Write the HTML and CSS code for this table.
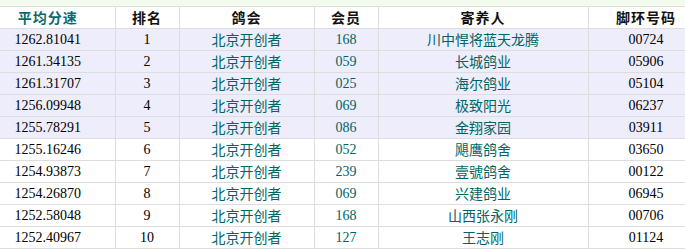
FILE: index.html
```html
<!DOCTYPE html>
<html lang="zh">
<head>
<meta charset="utf-8">
<link rel="stylesheet" href="styles.css">
</head>
<body>
<div class="topbar"></div>
<table class="rank">
  <colgroup>
    <col class="c-speed"><col class="c-rank"><col class="c-club"><col class="c-member"><col class="c-owner"><col class="c-ring">
  </colgroup>
  <thead>
    <tr>
      <th class="speed teal">平均分速</th>
      <th>排名</th>
      <th>鸽会</th>
      <th>会员</th>
      <th>寄养人</th>
      <th>脚环号码</th>
    </tr>
  </thead>
  <tbody>
    <tr class="hl"><td class="speed num">1262.81041</td><td class="num">1</td><td class="teal">北京开创者</td><td class="teal num">168</td><td class="teal">川中悍将蓝天龙腾</td><td class="num">00724</td></tr>
    <tr class="hl"><td class="speed num">1261.34135</td><td class="num">2</td><td class="teal">北京开创者</td><td class="teal num">059</td><td class="teal">长城鸽业</td><td class="num">05906</td></tr>
    <tr class="hl"><td class="speed num">1261.31707</td><td class="num">3</td><td class="teal">北京开创者</td><td class="teal num">025</td><td class="teal">海尔鸽业</td><td class="num">05104</td></tr>
    <tr class="hl"><td class="speed num">1256.09948</td><td class="num">4</td><td class="teal">北京开创者</td><td class="teal num">069</td><td class="teal">极致阳光</td><td class="num">06237</td></tr>
    <tr class="hl"><td class="speed num">1255.78291</td><td class="num">5</td><td class="teal">北京开创者</td><td class="teal num">086</td><td class="teal">金翔家园</td><td class="num">03911</td></tr>
    <tr><td class="speed num">1255.16246</td><td class="num">6</td><td class="teal">北京开创者</td><td class="teal num">052</td><td class="teal">飓鹰鸽舍</td><td class="num">03650</td></tr>
    <tr><td class="speed num">1254.93873</td><td class="num">7</td><td class="teal">北京开创者</td><td class="teal num">239</td><td class="teal">壹號鸽舍</td><td class="num">00122</td></tr>
    <tr><td class="speed num">1254.26870</td><td class="num">8</td><td class="teal">北京开创者</td><td class="teal num">069</td><td class="teal">兴建鸽业</td><td class="num">06945</td></tr>
    <tr><td class="speed num">1252.58048</td><td class="num">9</td><td class="teal">北京开创者</td><td class="teal num">168</td><td class="teal">山西张永刚</td><td class="num">00706</td></tr>
    <tr><td class="speed num">1252.40967</td><td class="num">10</td><td class="teal">北京开创者</td><td class="teal num">127</td><td class="teal">王志刚</td><td class="num">01124</td></tr>
  </tbody>
</table>
</body>
</html>
```
FILE: styles.css
```css
html, body {
  margin: 0;
  padding: 0;
  background: #ffffff;
  overflow: hidden;
}
body {
  width: 685px;
  height: 250px;
  font-family: "Noto Sans CJK SC", sans-serif;
  font-size: 14px;
  color: #000;
}
.topbar {
  height: 6px;
  background: #f4faee;
}
.rank {
  border-collapse: collapse;
  table-layout: fixed;
  width: 704px;
}
.c-speed { width: 115px; }
.c-rank { width: 64px; }
.c-club { width: 135px; }
.c-member { width: 64px; }
.c-owner { width: 210px; }
.c-ring { width: 116px; }

.rank th, .rank td {
  border: 1px solid #dddddd;
  height: 21px;
  padding: 0;
  text-align: center;
  vertical-align: middle;
  line-height: 21px;
  white-space: nowrap;
  overflow: hidden;
}
.rank th:first-child, .rank td:first-child {
  border-left: none;
}
.rank th {
  font-weight: bold;
  letter-spacing: 1px;
  color: #111;
  background: #ffffff;
}
.rank th.teal { color: #0a6b6b; }
.rank td.speed, .rank th.speed {
  padding-right: 19px;
}
.rank tr.hl td {
  background: #ededfb;
}
.num {
  font-family: "Liberation Serif", "Noto Sans CJK SC", serif;
  font-size: 14px;
}
.teal {
  color: #006464;
}
```
